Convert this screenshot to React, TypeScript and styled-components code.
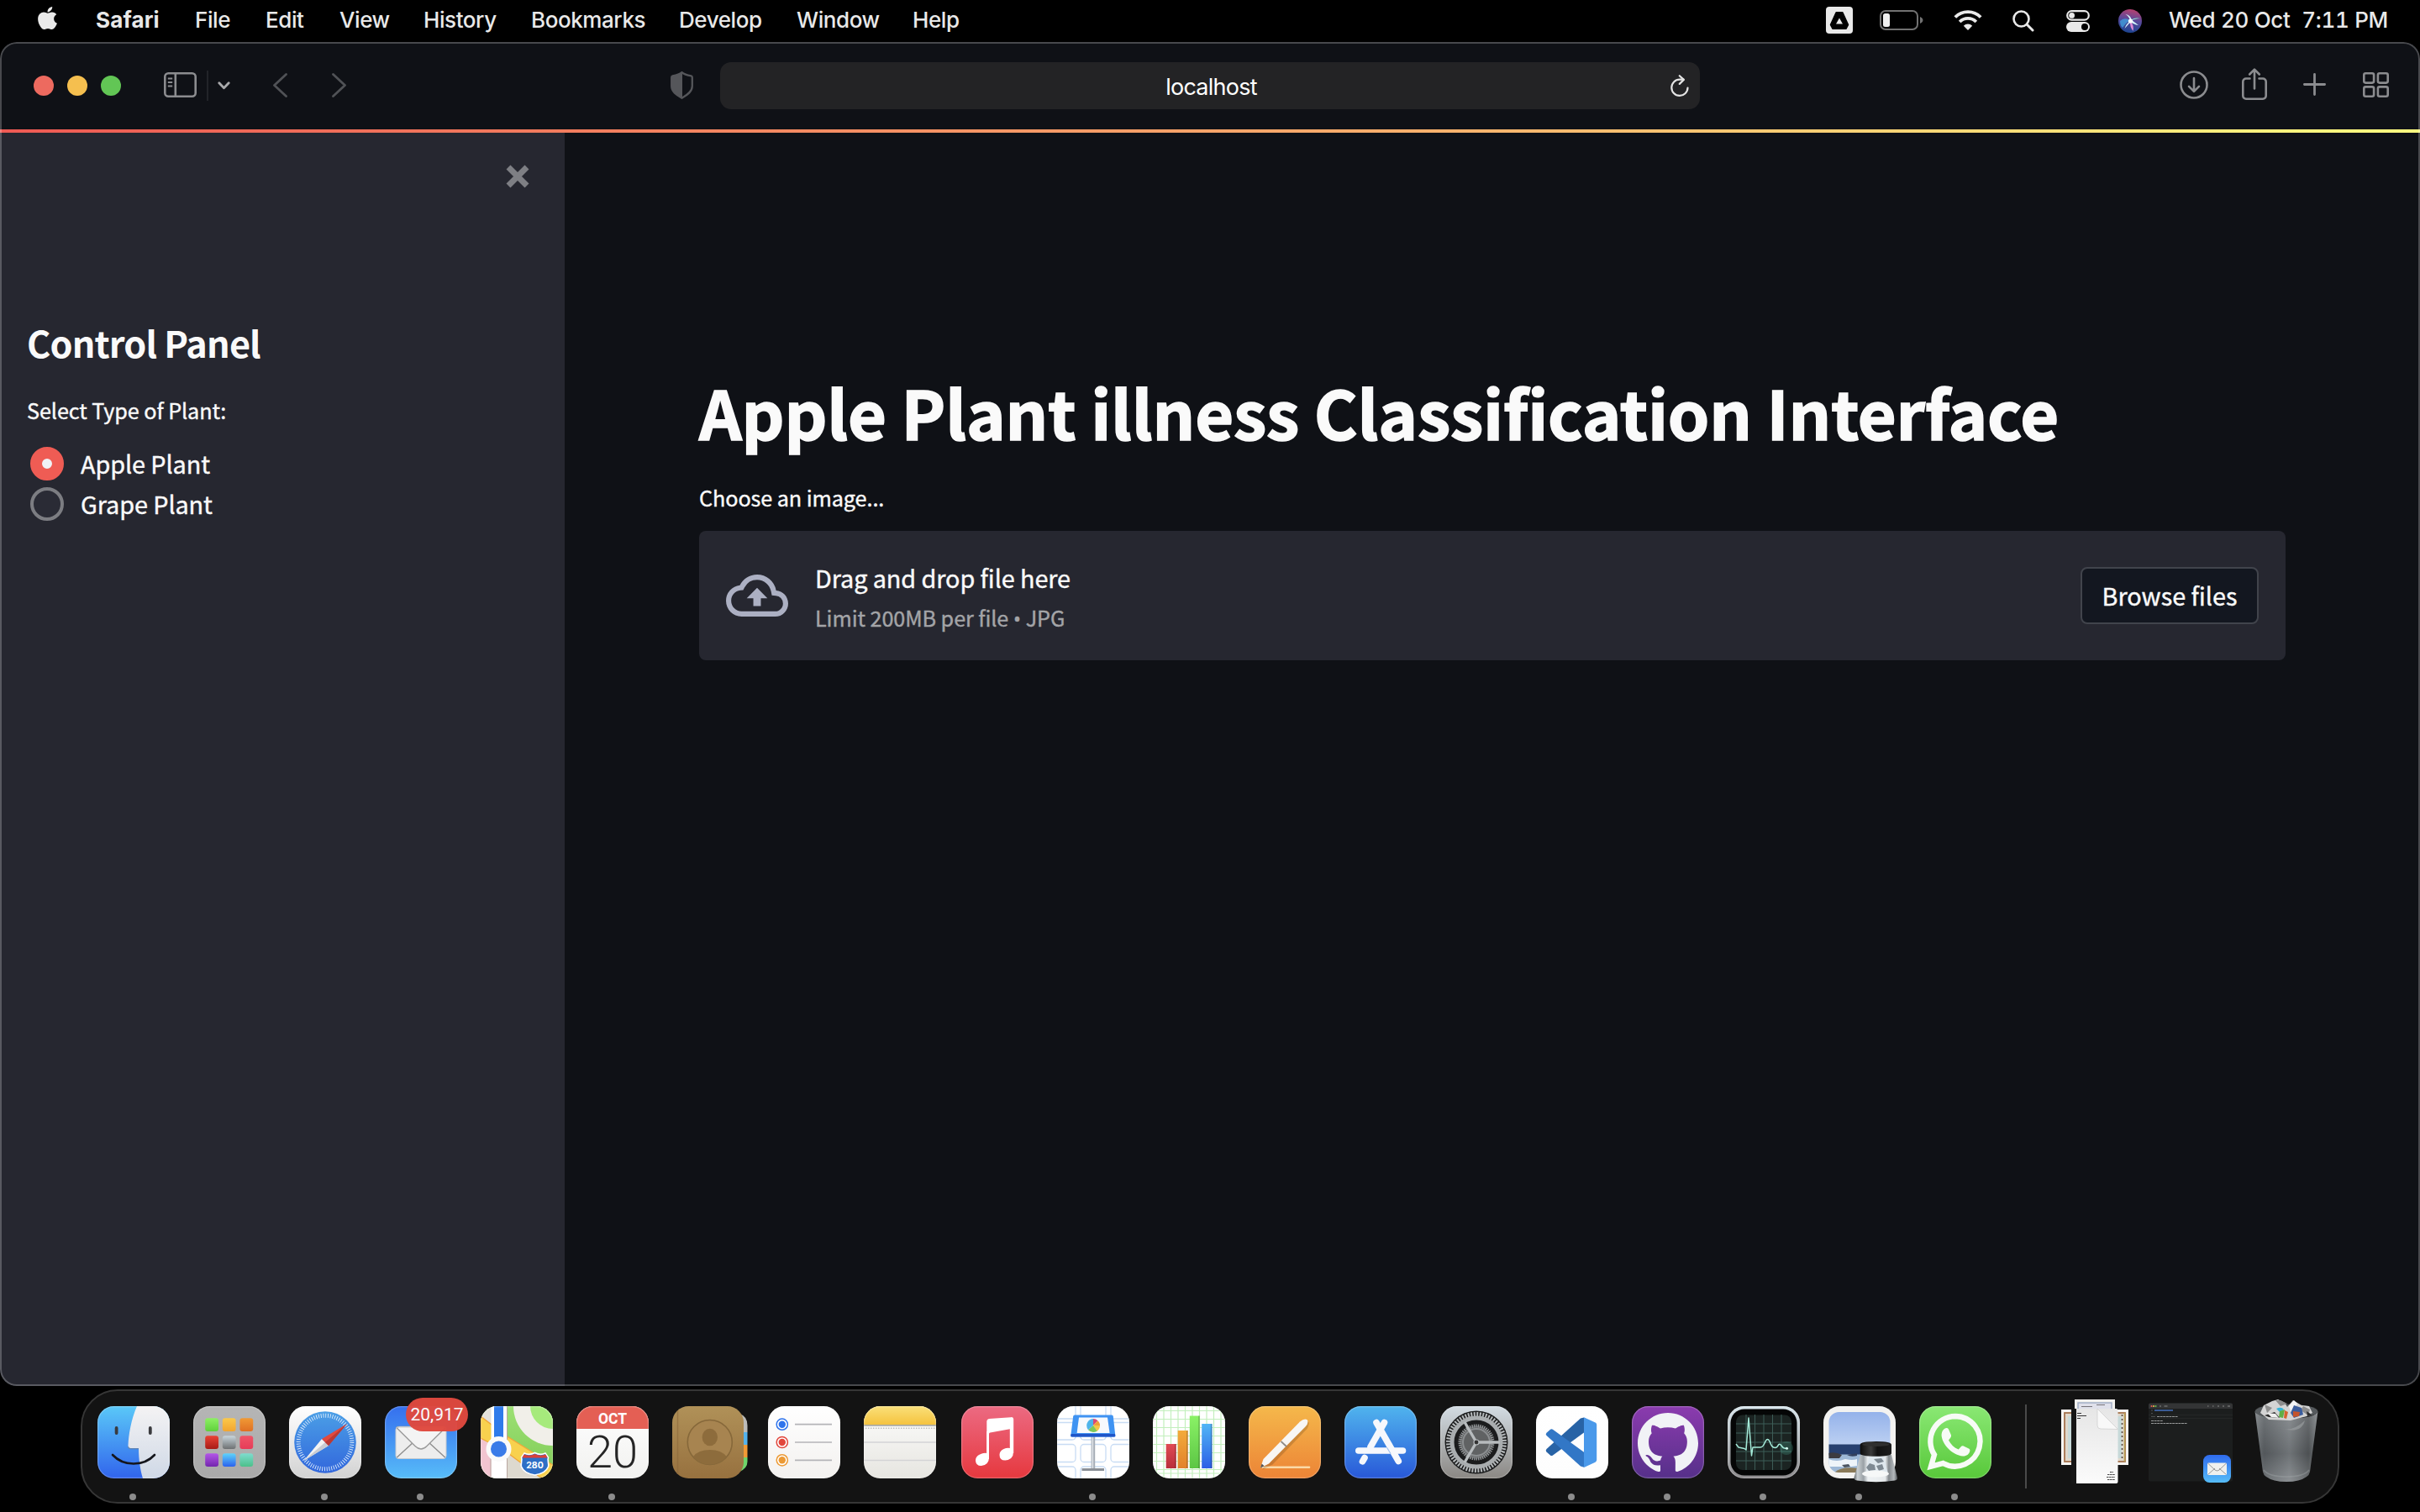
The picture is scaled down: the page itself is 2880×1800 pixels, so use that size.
import React from "react";
import styled, { createGlobalStyle } from "styled-components";
import { FaApple } from "react-icons/fa";

const UI_FONT = `Inter, Roboto, "Liberation Sans", sans-serif`;
const PAGE_FONT = `"Noto Sans CJK SC", "Open Sans", "Noto Sans", sans-serif`;

const GlobalStyle = createGlobalStyle`
  * { box-sizing: border-box; }
  html, body { margin: 0; padding: 0; background: #000; }
  body { width: 2880px; height: 1800px; overflow: hidden; }
  svg { display: block; flex: none; }
`;

const Desktop = styled.div`
  display: flex;
  flex-direction: column;
  width: 2880px;
  height: 1800px;
  background: #000;
`;

/* ---------- Menu bar ---------- */

const MenuBar = styled.header`
  display: flex;
  align-items: center;
  height: 50px;
  padding: 0 38px 0 41px;
  color: #e9e9e9;
  font-family: ${UI_FONT};
  font-size: 26px;
`;

const AppleMark = styled(FaApple)`
  width: 31px;
  height: 31px;
  margin-top: -7px;
`;

const MenuList = styled.nav`
  display: flex;
  flex: 1;
  padding-left: 42px;
`;

const MenuItem = styled.span<{ $width: number; $bold?: boolean }>`
  width: ${(p) => p.$width}px;
  font-weight: ${(p) => (p.$bold ? 700 : 500)};
  letter-spacing: ${(p) => (p.$bold ? 0.15 : -0.42)}px;
  line-height: 46px;
  padding-bottom: 2px;
  white-space: nowrap;
`;

const StatusArea = styled.div`
  display: flex;
  align-items: center;
`;

const Slot = styled.span<{ $before?: number; $lift?: number }>`
  display: flex;
  margin-left: ${(p) => p.$before ?? 0}px;
  margin-bottom: ${(p) => p.$lift ?? 0}px;
`;

const Clock = styled.span`
  display: flex;
  justify-content: space-between;
  width: 261px;
  margin-left: 32px;
  font-weight: 500;
  font-variant-numeric: tabular-nums;
  letter-spacing: -0.3px;
  line-height: 46px;
  padding-bottom: 2px;
  white-space: nowrap;
`;

/* ---------- Browser window ---------- */

const BrowserWindow = styled.section`
  position: relative;
  display: flex;
  flex-direction: column;
  height: 1600px;
  border-radius: 20px;
  overflow: hidden;
  background: #0f1116;
  &::after {
    content: "";
    position: absolute;
    inset: 0;
    border-radius: 20px;
    border: 2px solid rgba(255, 255, 255, 0.24);
    pointer-events: none;
  }
`;

const Toolbar = styled.div`
  display: flex;
  align-items: center;
  height: 104px;
  padding: 0 37px 0 40px;
`;

const ToolGroup = styled.div<{ $width?: number }>`
  display: flex;
  align-items: center;
  width: ${(p) => (p.$width ? `${p.$width}px` : "auto")};
  margin-left: ${(p) => (p.$width ? 0 : "auto")};
`;

const Light = styled.i<{ $color: string }>`
  width: 24px;
  height: 24px;
  margin-right: 16px;
  border-radius: 50%;
  background: ${(p) => p.$color};
`;

const ToolDivider = styled.i`
  width: 2px;
  height: 36px;
  margin-left: 12px;
  background: #222429;
`;

const AddressBar = styled.div`
  display: grid;
  grid-template-columns: 1fr auto 1fr;
  align-items: center;
  width: 1166px;
  height: 56px;
  margin-left: 32px;
  padding-right: 13px;
  border-radius: 13px;
  background: #232325;
`;

const Url = styled.span`
  grid-column: 2;
  margin-left: 16px;
  padding-top: 2px;
  color: #fff;
  font-family: ${UI_FONT};
  font-size: 27px;
  letter-spacing: -0.75px;
`;

const Reload = styled.span`
  display: flex;
  justify-content: flex-end;
`;

const Decoration = styled.div`
  height: 4px;
  flex: none;
  background: linear-gradient(90deg, #ee5a54 0%, #f8b26d 60%, #fffd80 100%);
`;

const PageBody = styled.div`
  display: flex;
  flex: 1;
  color: #fafafa;
  font-family: ${PAGE_FONT};
`;

const Sidebar = styled.aside`
  display: flex;
  flex-direction: column;
  width: 672px;
  padding: 38px 32px;
  background: #262730;
`;

const CloseButton = styled.div`
  align-self: flex-end;
  padding-right: 10px;
`;

const PanelTitle = styled.h2`
  margin: 154px 0 31px;
  font-size: 43.2px;
  font-weight: 600;
  letter-spacing: -0.85px;
  line-height: 58px;
`;

const FieldLabel = styled.div`
  font-size: 25.2px;
  line-height: 42px;
  letter-spacing: -0.08px;
  white-space: nowrap;
  -webkit-text-stroke: 0.4px currentColor;
`;

const RadioGroup = styled.div`
  display: flex;
  flex-direction: column;
  padding: 19px 4px 0;
`;

const RadioRow = styled.div`
  display: flex;
  align-items: center;
  height: 48px;
  gap: 20px;
`;

const RadioMark = styled.i<{ $on?: boolean }>`
  width: 40px;
  height: 40px;
  border-radius: 50%;
  border: ${(p) => (p.$on ? "14px solid #ef5c54" : "4px solid #7c7d82")};
  background: ${(p) => (p.$on ? "#f0f2f6" : "#2a2b35")};
`;

const BodyText = styled.span`
  font-size: 28.8px;
  line-height: 46px;
  letter-spacing: -0.08px;
  white-space: nowrap;
  -webkit-text-stroke: 0.4px currentColor;
`;

const Main = styled.main`
  flex: 1;
  padding: 279px 160px 0;
`;

const PageTitle = styled.h1`
  margin: 0 0 28px;
  font-size: 79.2px;
  font-weight: 700;
  letter-spacing: -0.18px;
  line-height: 106px;
  white-space: nowrap;
  font-variant-ligatures: none;
  -webkit-text-stroke: 1.6px currentColor;
`;

const Dropzone = styled.div`
  display: flex;
  align-items: center;
  height: 154px;
  margin-top: 19px;
  padding: 0 32px;
  border-radius: 8px;
  background: #262730;
`;

const DropText = styled.div`
  display: flex;
  flex: 1;
  flex-direction: column;
  gap: 3px;
  margin-left: 32px;
  padding-top: 3px;
`;

const Hint = styled(FieldLabel)`
  color: #a3a4a7;
`;

const Bullet = styled.span`
  font-family: "Open Sans", "Noto Sans", sans-serif;
`;

const BrowseButton = styled.button`
  width: 212px;
  height: 68px;
  padding: 0;
  border: 2px solid #41444c;
  border-radius: 8px;
  background: #131720;
  color: #fafafa;
  font-family: ${PAGE_FONT};
  font-size: 28.8px;
  line-height: 62px;
  white-space: nowrap;
  -webkit-text-stroke: 0.4px currentColor;
`;

/* ---------- Dock ---------- */

const DockBar = styled.footer`
  display: flex;
  align-items: flex-start;
  width: 2688px;
  height: 136px;
  margin: 4px 0 0 96px;
  padding: 0 0 0 18px;
  border: 2px solid #363636;
  border-radius: 44px;
  background: #131313;
`;

const DockCell = styled.div<{ $before?: number }>`
  position: relative;
  display: flex;
  flex-direction: column;
  align-items: center;
  width: 86px;
  margin-left: ${(p) => p.$before ?? 28}px;
  padding-top: 18px;
  svg { overflow: visible; }
`;

const RunningDot = styled.i`
  width: 8px;
  height: 8px;
  margin: 18px 2px 0 0;
  border-radius: 50%;
  background: #8c8c8c;
`;

const Badge = styled.span`
  position: absolute;
  top: 8px;
  left: 25px;
  width: 74px;
  height: 40px;
  border-radius: 20px;
  background: #e0493f;
  opacity: 0.97;
  color: #fff;
  font-family: Roboto, ${UI_FONT};
  font-size: 21px;
  line-height: 40px;
  text-align: center;
`;

const DockDivider = styled.i`
  width: 2px;
  height: 100px;
  margin: 16px 0 0 40px;
  background: #4a4a4a;
`;

const DockExtra = styled.div<{ $before: number }>`
  margin-left: ${(p) => p.$before}px;
  padding-top: 10px;
`;

/* ---------- Status icons ---------- */

const InputIcon = () => (
  <svg width="32" height="32" viewBox="0 0 32 32">
    <rect width="32" height="32" rx="4" fill="#e9e9e9" />
    <path d="M12.4 7h7.2l6.6 14.5-2.4 4.5H8.2l-2.4-4.500z" fill="#000" stroke="#000" strokeWidth="2" strokeLinejoin="round" />
    <path d="M16 13.500l4 7h-8z" fill="#e9e9e9" />
  </svg>
);

const BatteryIcon = () => (
  <svg width="52" height="24" viewBox="0 0 52 24">
    <rect x="1" y="1" width="44" height="22" rx="6" fill="none" stroke="#717171" strokeWidth="2" />
    <path d="M48 8q3.500 1.500 3.500 4t-3.500 4z" fill="#717171" />
    <rect x="4" y="4" width="8" height="16" rx="2.500" fill="#f0f0f0" />
  </svg>
);

const WifiIcon = () => (
  <svg width="34" height="24" viewBox="0 0 34 24" fill="none" stroke="#e9e9e9" strokeWidth="3.800">
    <path d="M1.800 8.500a21.500 21.500 0 0 1 30.400 0" />
    <path d="M7.200 14a13.900 13.900 0 0 1 19.600 0" />
    <path d="M17 24l-5.200-5.200a7.300 7.300 0 0 1 10.400 0z" fill="#e9e9e9" stroke="none" />
  </svg>
);

const SearchIcon = () => (
  <svg width="26" height="26" viewBox="0 0 26 26" fill="none" stroke="#e9e9e9" strokeWidth="2.600" strokeLinecap="round">
    <circle cx="10.500" cy="10.500" r="9" />
    <path d="M17.300 17.300l6.700 6.700" strokeWidth="3" />
  </svg>
);

const ControlCenterIcon = () => (
  <svg width="28" height="26" viewBox="0 0 28 26">
    <rect x="1.200" y="1.200" width="25.600" height="10.400" rx="5.200" fill="none" stroke="#e9e9e9" strokeWidth="2.200" />
    <circle cx="6.600" cy="6.400" r="3.400" fill="#e9e9e9" />
    <rect y="14" width="28" height="12" rx="6" fill="#e9e9e9" />
    <circle cx="22" cy="20" r="4" fill="#000" />
  </svg>
);

const SiriIcon = () => (
  <svg width="28" height="28" viewBox="0 0 28 28">
    <defs>
      <linearGradient id="siri" x1="0.600" y1="0" x2="0.400" y2="1">
        <stop offset="0" stopColor="#b8406e" />
        <stop offset="0.450" stopColor="#5a4a9c" />
        <stop offset="1" stopColor="#1b4490" />
      </linearGradient>
    </defs>
    <circle cx="14" cy="14" r="14" fill="url(#siri)" />
    <path d="M2 14q5-5 12-1-6 4-9 9-3-3-3-8z" fill="#3fa3e0" opacity=".75" />
    <path d="M14 14q5-5 12-3-6 0-12 3z" fill="#8ff0d8" />
    <path d="M14 14q5 5 3.500 12-4-5-3.500-12z" fill="#e08ad8" />
    <path d="M14.500 14q-2-6-6-8 6 1 7.500 7l8 6q-6-1-9.500-4l-7 8q2-6 7-9z" fill="#d9fbff" />
    <circle cx="14.500" cy="14" r="2.600" fill="#fff" />
  </svg>
);

/* ---------- Toolbar icons ---------- */

const SidebarIcon = () => (
  <svg width="39" height="30" viewBox="0 0 39 30" fill="none" stroke="#8b8c8f" strokeWidth="2.600">
    <rect x="1.300" y="1.300" width="36.400" height="27.400" rx="4" />
    <path d="M13.800 1v28" />
    <path d="M4.800 7.500h5.400M4.800 12h5.400M4.800 16.500h5.400" strokeWidth="2" />
  </svg>
);

const SmallChevron = () => (
  <svg width="15" height="10" viewBox="0 0 15 10" fill="none" stroke="#a9aaac" strokeWidth="2.800" strokeLinecap="round" strokeLinejoin="round">
    <path d="M1.800 1.800l5.700 6 5.700-6" />
  </svg>
);

const NavArrow = ({ forward }: { forward?: boolean }) => (
  <svg width="17" height="29" viewBox="0 0 17 29" fill="none" stroke="#505256" strokeWidth="2.800" strokeLinecap="round" strokeLinejoin="round">
    <path d={forward ? "M1.500 1.500l14 13-14 13" : "M15.500 1.500l-14 13 14 13"} />
  </svg>
);

const ShieldIcon = () => (
  <svg width="27" height="33" viewBox="0 0 27 33">
    <path d="M13.500 1.200C16 3.400 20 4.600 24.500 5.400q1.300.3 1.300 1.800v10.300c0 6.500-5.800 10.500-12.300 14.200C7 28 1.200 24 1.200 17.500V7.200q0-1.500 1.300-1.800C7 4.600 11 3.400 13.500 1.200z" fill="none" stroke="#55565a" strokeWidth="2.300" />
    <path d="M14 1.200C11 3.400 7 4.600 2.500 5.400 1.200 5.700 1.200 6 1.200 7.200v10.300C1.200 24 7 28 14 31.700z" fill="#55565a" />
  </svg>
);

const ReloadIcon = () => (
  <svg width="22" height="27" viewBox="0 0 22 27" fill="none" stroke="#e4e4e4" strokeWidth="2.200" strokeLinecap="round" strokeLinejoin="round">
    <path d="M20.500 15.500a9.600 9.600 0 1 1-9.600-9.800h4.600" />
    <path d="M10.800 1.200l5 4.700-5 5" />
  </svg>
);

const DownloadIcon = () => (
  <svg width="34" height="34" viewBox="0 0 34 34" fill="none" stroke="#8b8c8f" strokeWidth="2.600" strokeLinecap="round" strokeLinejoin="round">
    <circle cx="17" cy="17" r="15.500" />
    <path d="M17 9v15.500M11 18.800l6 6 6-6" />
  </svg>
);

const ShareIcon = () => (
  <svg width="30" height="38" viewBox="0 0 30 38" fill="none" stroke="#8b8c8f" strokeWidth="2.600" strokeLinecap="round" strokeLinejoin="round">
    <path d="M9.500 12.500H5a3.700 3.700 0 0 0-3.700 3.700V33A3.700 3.700 0 0 0 5 36.700h20a3.700 3.700 0 0 0 3.700-3.700V16.200A3.700 3.700 0 0 0 25 12.500h-4.500" />
    <path d="M15 24.500V2M9.200 7.500L15 1.600l5.800 5.900" />
  </svg>
);

const PlusIcon = () => (
  <svg width="27" height="27" viewBox="0 0 27 27" stroke="#8b8c8f" strokeWidth="2.800" strokeLinecap="round">
    <path d="M13.500 1.400v24.200M1.400 13.500h24.200" />
  </svg>
);

const GridIcon = () => (
  <svg width="31" height="30" viewBox="0 0 31 30" fill="none" stroke="#8b8c8f" strokeWidth="2.600">
    <rect x="1.300" y="1.300" width="11.800" height="11.300" rx="2" />
    <rect x="17.900" y="1.300" width="11.800" height="11.300" rx="2" />
    <rect x="1.300" y="17.400" width="11.800" height="11.300" rx="2" />
    <rect x="17.900" y="17.400" width="11.800" height="11.300" rx="2" />
  </svg>
);

const CloseIcon = () => (
  <svg width="28" height="28" viewBox="0 0 28 28" stroke="#7e7f84" strokeWidth="7" strokeLinecap="butt">
    <path d="M3 3l22 22M25 3L3 25" />
  </svg>
);

const CloudIcon = () => (
  <svg width="74" height="50" viewBox="0 4 24 16" preserveAspectRatio="none" fill="#acb0c3">
    <path d="M19.350 10.040A7.490 7.490 0 0 0 12 4C9.110 4 6.600 5.640 5.350 8.040A5.994 5.994 0 0 0 0 14c0 3.310 2.690 6 6 6h13c2.760 0 5-2.240 5-5 0-2.640-2.050-4.780-4.650-4.960zM19 18H6c-2.210 0-4-1.790-4-4 0-2.050 1.530-3.760 3.560-3.970l1.070-.11.500-.95A5.469 5.469 0 0 1 12 6c2.620 0 4.880 1.860 5.390 4.430l.3 1.500 1.530.11A2.980 2.980 0 0 1 22 15c0 1.650-1.350 3-3 3zM8 13h2.550v3h2.900v-3H16l-4-4z" />
  </svg>
);

/* ---------- Dock icons ---------- */

type TileProps = { id: string; top: string; bottom: string; children?: React.ReactNode };

const Tile = ({ id, top, bottom, children }: TileProps) => (
  <svg width="86" height="86" viewBox="0 0 86 86">
    <defs>
      <linearGradient id={`${id}-bg`} x1="0" y1="0" x2="0" y2="1">
        <stop offset="0" stopColor={top} />
        <stop offset="1" stopColor={bottom} />
      </linearGradient>
      <clipPath id={`${id}-clip`}>
        <rect width="86" height="86" rx="19.500" />
      </clipPath>
    </defs>
    <rect width="86" height="86" rx="19.500" fill={`url(#${id}-bg)`} />
    <g clipPath={`url(#${id}-clip)`}>{children}</g>
    <rect x=".6" y=".6" width="84.800" height="84.800" rx="19" fill="none" stroke="#fff" strokeOpacity=".22" strokeWidth="1.200" />
  </svg>
);

const Finder = () => (
  <Tile id="finder" top="#5ac8f8" bottom="#3164ec">
    <defs>
      <linearGradient id="finder-face" x1="0" y1="0" x2="0" y2="1">
        <stop offset="0" stopColor="#f4f3f4" />
        <stop offset="1" stopColor="#cfd8e6" />
      </linearGradient>
    </defs>
    <path d="M47 0C40 16 37 34 36.500 47q0 3 3 3H49c0 14 2 26 5 36h32V0z" fill="url(#finder-face)" />
    <path d="M36.500 48q.3 2.600 3 2.600H49" fill="none" stroke="#777" strokeOpacity=".5" strokeWidth="1.200" />
    <path d="M22.600 26v6M62.800 26v6" stroke="#3a3a3e" strokeWidth="3.800" strokeLinecap="round" />
    <path d="M18 58c13 14 37 14 50 0" fill="none" stroke="#15161c" strokeWidth="2.600" strokeLinecap="round" />
  </Tile>
);

const padColors: [string, string][] = [
  ["#8ef064", "#5fd03c"], ["#fbc94a", "#f2a530"], ["#f09a35", "#e07024"],
  ["#ea4335", "#a81c16"], ["#c9d6dc", "#6d7072"], ["#ef5568", "#e63c58"],
  ["#b457e8", "#7326ae"], ["#5fd4fa", "#2b62ee"], ["#7fdccf", "#4cc08a"],
];

const Launchpad = () => (
  <Tile id="pad" top="#b5b5b5" bottom="#aaaaaa">
    <defs>
      {padColors.map(([a, b], i) => (
        <linearGradient key={i} id={`pad-${i}`} x1="0" y1="0" x2="0" y2="1">
          <stop offset="0" stopColor={a} />
          <stop offset="1" stopColor={b} />
        </linearGradient>
      ))}
    </defs>
    {padColors.map((_, i) => (
      <rect key={i} x={14.200 + (i % 3) * 20.600} y={14.200 + Math.floor(i / 3) * 21} width="15.800" height="15.800" rx="3" fill={`url(#pad-${i})`} />
    ))}
  </Tile>
);

const SafariApp = () => (
  <Tile id="safari" top="#ffffff" bottom="#d2d2d2">
    <defs>
      <linearGradient id="safari-dial" x1="0" y1="0" x2="0" y2="1">
        <stop offset="0" stopColor="#4b9fe6" />
        <stop offset="1" stopColor="#3267dc" />
      </linearGradient>
    </defs>
    <circle cx="43" cy="43" r="36.800" fill="url(#safari-dial)" />
    <circle cx="43" cy="43" r="31.800" fill="none" stroke="#dfeefc" strokeWidth="5" strokeDasharray="0.900 1.876" />
    <path d="M17.500 65L39 39l8 8z" fill="#f3f3f3" />
    <path d="M17.500 65L43 43l4 4z" fill="#c9ccd2" />
    <path d="M69 21L39 39l8 8z" fill="#e2493e" />
    <path d="M69 21L43 43l4 4z" fill="#b83a36" />
  </Tile>
);

const Envelope = () => (
  <g>
    <rect x="13" y="24.500" width="60" height="38" rx="3.500" fill="#ededed" />
    <path d="M13.800 61.500L35 42M72.200 61.500L51 42" stroke="#8e8e8e" strokeWidth="1.400" />
    <path d="M13.800 25.500L36 47.500q7 7 14 0L72.200 25.500q-1-1-3-1H17q-2 0-3.200 1z" fill="#f4f4f4" stroke="#9b9b9b" strokeWidth="1.400" />
    <rect x="13" y="24.500" width="60" height="38" rx="3.500" fill="none" stroke="#c4c9cf" strokeWidth="1" />
  </g>
);

const Mail = () => (
  <Tile id="mail" top="#356fee" bottom="#57bcf8">
    <Envelope />
  </Tile>
);

const Maps = () => (
  <Tile id="maps" top="#9de074" bottom="#7ecb56">
    <rect width="32" height="86" fill="#e4e1da" />
    <path d="M30 50L86 86H30z" fill="#ddd9cf" />
    <path d="M0 38L14 48V86H0z" fill="#f2c4d0" />
    <circle cx="86" cy="0" r="47" fill="#f1efe9" />
    <circle cx="86" cy="0" r="27" fill="#a6ea7c" />
    <path d="M0 12L30 35 86 70V90L70 84 30 54 0 38z" fill="#f8d14e" stroke="#f0a63a" strokeWidth="1.400" />
    <rect x="12.500" y="-2" width="18.500" height="90" fill="#fff" />
    <path d="M12 45V86M31.500 0V86" stroke="#b9a7a0" strokeWidth="1" />
    <rect x="16" width="11" height="44" fill="#2f7bea" />
    <circle cx="21.500" cy="51" r="15" fill="#fafafa" />
    <circle cx="21.500" cy="51" r="9.500" fill="#3a7be8" />
    <path d="M52 56q6 3 12.500-.5Q71 59 77 56l3.500 5c-1.500 3 1 7 0 11q-3 8-16 10-13-2-16-10c-1-4 1.500-8 0-11z" fill="#2e6fc6" stroke="#fff" strokeWidth="1.600" />
    <path d="M51.500 57.500q6.500 2.500 13-.5 6.500 3 13 .5l2 4h-30z" fill="#d9403a" />
    <text x="64.500" y="73.500" fill="#fff" fontFamily={UI_FONT} fontSize="10.500" fontWeight="700" textAnchor="middle">280</text>
  </Tile>
);

const Calendar = () => (
  <Tile id="cal" top="#ffffff" bottom="#f1f1ef">
    <rect width="86" height="27" fill="#e45f54" />
    <text x="43" y="20.800" fill="#fff" fontFamily={`Roboto, ${UI_FONT}`} fontSize="17.500" fontWeight="700" textAnchor="middle">OCT</text>
    <text x="43" y="72.500" fill="#252525" fontFamily={`Roboto, ${UI_FONT}`} fontSize="54" fontWeight="300" textAnchor="middle">20</text>
  </Tile>
);

const Contacts = () => (
  <svg width="86" height="86" viewBox="0 0 86 86">
    <defs>
      <linearGradient id="book" x1="0" y1="0" x2="0" y2="1">
        <stop offset="0" stopColor="#b09158" />
        <stop offset="1" stopColor="#97713f" />
      </linearGradient>
    </defs>
    <path d="M80 9q9.500 3 9.500 14v8H80z" fill="#bcbcba" />
    <path d="M80 31h9.500v15H80z" fill="#55b3ec" />
    <path d="M80 46h9.500v15H80z" fill="#f29a36" />
    <path d="M80 61h9.500v5q0 8-9.500 12z" fill="#6fd66b" />
    <rect width="85" height="86" rx="19.500" fill="url(#book)" />
    <path d="M6.500 5V81" stroke="#8a683a" strokeOpacity=".6" strokeWidth="1.400" />
    <circle cx="44.800" cy="43" r="26.500" fill="#a78450" stroke="#86683a" strokeWidth="1.600" />
    <ellipse cx="44.800" cy="37" rx="9.200" ry="10.300" fill="#8d6c3c" />
    <path d="M25 60q6-8 19.800-8t19.800 8Q57 69.500 44.800 69.500T25 60z" fill="#8d6c3c" />
  </svg>
);

const Reminders = () => (
  <Tile id="rem" top="#ffffff" bottom="#f3f1ef">
    {["#2f74ec", "#e2473c", "#ec9a35"].map((c, i) => (
      <g key={c}>
        <circle cx="16.800" cy={21.700 + i * 21.300} r="6.600" fill="#fff" stroke={c} strokeWidth="1.500" />
        <circle cx="16.800" cy={21.700 + i * 21.300} r="4.200" fill={c} />
        <path d={`M32 ${21.700 + i * 21.300}h44`} stroke="#b4b4b8" strokeWidth="1.700" />
      </g>
    ))}
  </Tile>
);

const Notes = () => (
  <Tile id="notes" top="#fdfdfc" bottom="#e6e5e0">
    <defs>
      <linearGradient id="notes-top" x1="0" y1="0" x2="0" y2="1">
        <stop offset="0" stopColor="#fae07a" />
        <stop offset="1" stopColor="#f5c33e" />
      </linearGradient>
    </defs>
    <rect width="86" height="22" fill="url(#notes-top)" />
    <path d="M0 22.800h86" stroke="#aaa99f" strokeWidth="1.800" />
    <path d="M2 26.300h84" stroke="#bdbdb9" strokeWidth="1.400" strokeDasharray="1.400 1.600" />
    <path d="M0 43h86M0 64.500h86" stroke="#d4d4d6" strokeWidth="1.500" />
  </Tile>
);

const Music = () => (
  <Tile id="music" top="#ec6a82" bottom="#e6383e">
    <g fill="#fff">
      <path d="M30.300 18.500q0-2.800 2.800-3.500L59 13.200q3.200-.6 3.200 2.400V56h-4.400V27.200L34.300 31.500q-1.300.3-1.300 1.600V63h-2.700z" />
      <path d="M30.300 56q-4.300-.6-8.300 1.400-5 2.400-5 7 0 6.600 6.800 6.600 9.200-1 9.200-10V30h-2.700z" />
      <path d="M58 50q-4-.6-7.500 1-5 2.400-5 7 0 6.600 6.800 6.600 9.700-1 9.700-10V40H58z" />
    </g>
  </Tile>
);

const Keynote = () => (
  <Tile id="key" top="#ffffff" bottom="#ffffff">
    <g fill="none" stroke="#c8dcf4" strokeWidth="1.300">
      <path d="M0 15h86M0 19.500h86M22 0v38M28 0v38M58 0v38M64 0v38" />
      <path d="M0 40h18q4 0 4-4M64 36q0 4 4 4h18M28 36q0 4 4 4h22q4 0 4-4" />
      <rect x="-10" y="45.500" width="32" height="21" rx="4" />
      <rect x="28" y="45.500" width="30" height="21" rx="4" />
      <rect x="64" y="45.500" width="32" height="21" rx="4" />
      <rect x="-10" y="72" width="32" height="24" rx="4" />
      <rect x="28" y="72" width="30" height="24" rx="4" />
      <rect x="64" y="72" width="32" height="24" rx="4" />
    </g>
    <rect x="40.600" y="36" width="4.600" height="39" fill="#a6adb6" />
    <rect x="41.600" y="36" width="1.600" height="39" fill="#dfe3e8" />
    <rect x="29.500" y="74" width="26.500" height="3" fill="#8b9097" />
    <path d="M21 10.500h44q1.600 0 1.800 1.500L69.300 35q.1 1.500-1.500 1.500h-50q-1.600 0-1.500-1.500L19.200 12q.2-1.500 1.800-1.500z" fill="#3f93f2" />
    <path d="M16.600 33l-.3 2.300q0 1.200 1.500 1.200h50q1.600 0 1.500-1.200L69 33z" fill="#1f55c8" />
    <path d="M26 13.500h34l2.600 18.500H23.600z" fill="#f6f9fd" />
    <path d="M43 22.700V15a8 7.700 0 0 1 5.500 2.300z" fill="#d84a78" />
    <path d="M43 22.700l5.500-5.400A8 8 0 0 1 51 24z" fill="#f0a038" />
    <path d="M43 22.700l8 .5q0 4-4 7z" fill="#f4c84a" />
    <path d="M43 22.700l4.500 7q-6 3-10.500-1.500z" fill="#7cc95c" />
    <path d="M43 22.700l-6 5.500q-3.500-5-.5-9.500Q39 15 43 15z" fill="#4db4ea" />
  </Tile>
);

const bars: [number, number, number, string, string][] = [
  [15.700, 45, 12, "#e04a55", "#b92f3b"],
  [29.700, 29, 12, "#f3ab3c", "#e2812b"],
  [43.800, 11.500, 12, "#8af266", "#5cc644"],
  [58.200, 21, 12.300, "#52b6f6", "#2c5fe6"],
];

const Numbers = () => (
  <Tile id="num" top="#ffffff" bottom="#ffffff">
    <path d="M4.500 0v86M13 0v86M21.500 0v86M30 0v86M38.500 0v86M47 0v86M55.500 0v86M64 0v86M72.500 0v86M81 0v86M0 5.500h86M0 15.500h86M0 25.500h86M0 35.500h86M0 45.500h86M0 55.500h86M0 65.500h86M0 75.500h86M0 80h86" stroke="#c3efbd" strokeWidth="1.200" />
    {bars.map(([x, y, w, a, b], i) => (
      <g key={i}>
        <defs>
          <linearGradient id={`num-${i}`} x1="0" y1="0" x2="0" y2="1">
            <stop offset="0" stopColor={a} />
            <stop offset="1" stopColor={b} />
          </linearGradient>
        </defs>
        <rect x={x} y={y} width={w} height={74 - y} fill={`url(#num-${i})`} />
        <path d={`M${x + w - 0.800} ${y}V74`} stroke="#000" strokeOpacity=".2" strokeWidth="1.600" />
      </g>
    ))}
  </Tile>
);

const Pages = () => (
  <Tile id="pages" top="#f5b84b" bottom="#ec8436">
    <path d="M17 72.700h55" stroke="#fbd9a6" strokeWidth="2.600" strokeLinecap="round" />
    <path d="M15 73.500l4-9.500L61 19q5-4.500 8.500-2.700Q71.500 19 68 25L27 67.500z" fill="#000" fillOpacity=".15" transform="translate(1.500 2)" />
    <path d="M14 73.500l3.500-10.500L61 18.500q5-4.200 8.500-2.500Q72 19.500 67.500 24.500L24 68.500z" fill="#f8f6f4" />
    <path d="M14 73.500l1.600-5 3 2.700z" fill="#555" />
    <path d="M38.500 42l6.500 6" stroke="#8e8a86" strokeWidth="1.800" />
  </Tile>
);

const AppStore = () => (
  <Tile id="store" top="#50b4ee" bottom="#2858d8">
    <g stroke="#f6f8fc" strokeWidth="7.600" strokeLinecap="round">
      <path d="M38 19.500L64.300 65.500" />
      <path d="M16.800 53H69.500" />
      <path d="M47.500 19.500L31 48.500" />
      <path d="M24 61.500L21.500 65.800" />
    </g>
    <path d="M50.500 49.300l4.600 7.500" stroke="#9fc1ee" strokeWidth="1.200" />
  </Tile>
);

const SystemPrefs = () => (
  <Tile id="prefs" top="#d3dce3" bottom="#8b8884">
    <circle cx="43" cy="43" r="37.500" fill="#1b1c1d" />
    <circle cx="43" cy="43" r="33.500" fill="none" stroke="#b4b8ba" strokeWidth="5" strokeDasharray="2 1.508" />
    <circle cx="43" cy="43" r="29" fill="none" stroke="#a9adaf" strokeWidth="5" />
    <circle cx="43" cy="43" r="19.500" fill="#5d5f60" stroke="#929597" strokeWidth="4" strokeDasharray="1.400 1.050" />
    <circle cx="43" cy="43" r="16" fill="#606263" stroke="#8b8e90" strokeWidth="2" />
    <g stroke="#b7bbbd" strokeWidth="3.400">
      <path d="M43 43H71M43 43L29 19M43 43L29 67" />
    </g>
    <circle cx="43" cy="43" r="3" fill="#333" stroke="#b7bbbd" strokeWidth="1.200" />
  </Tile>
);

const VSCode = () => (
  <Tile id="code" top="#ffffff" bottom="#fdfdfd">
    <path d="M57 13.500V31.500L20 58.500q-1.600 1-3 0l-4.500-4q-1.600-1.700 0-3.400L53 14.500z" fill="#2863a6" />
    <path d="M57 72.700V54.800L20 27.700q-1.600-1-3 0l-4.500 4q-1.600 1.700 0 3.400L53 71.500z" fill="#3277c6" />
    <path d="M57 13.200l13.500 6.200q1.700.9 1.700 2.700V64q0 1.800-1.700 2.700L57 73z" fill="#4a99ea" />
  </Tile>
);

const GitHubApp = () => (
  <Tile id="gh" top="#8b3bae" bottom="#56308a">
    <g transform="translate(7 7) scale(3)">
      <path fill="#f1f2f6" d="M12 .297c-6.630 0-12 5.373-12 12 0 5.303 3.438 9.800 8.205 11.385.6.113.82-.258.82-.577 0-.285-.01-1.040-.015-2.040-3.338.724-4.042-1.610-4.042-1.610C4.422 18.070 3.633 17.700 3.633 17.700c-1.087-.744.084-.729.084-.729 1.205.084 1.838 1.236 1.838 1.236 1.070 1.835 2.809 1.305 3.495.998.108-.776.417-1.305.76-1.605-2.665-.3-5.466-1.332-5.466-5.930 0-1.310.465-2.380 1.235-3.220-.135-.303-.54-1.523.105-3.176 0 0 1.005-.322 3.300 1.230.96-.267 1.980-.399 3-.405 1.020.006 2.040.138 3 .405 2.280-1.552 3.285-1.230 3.285-1.230.645 1.653.24 2.873.12 3.176.765.84 1.230 1.910 1.230 3.220 0 4.610-2.805 5.625-5.475 5.920.42.36.81 1.096.81 2.220 0 1.606-.015 2.896-.015 3.286 0 .315.21.69.825.57C20.565 22.092 24 17.592 24 12.297c0-6.627-5.373-12-12-12" />
    </g>
  </Tile>
);

const ActivityMonitor = () => (
  <Tile id="act" top="#d8e6ec" bottom="#8c8a8c">
    <rect x="3.500" y="3.500" width="79" height="79" rx="16.500" fill="#050606" />
    <rect x="10" y="10.500" width="66" height="65.500" rx="8" fill="#1b2422" />
    <path d="M22 10v66M32.500 10v66M43 10v66M53.500 10v66M64 10v66M10 21h66M10 32h66M10 43h66M10 54h66M10 65h66" stroke="#3d5c56" strokeWidth="1" />
    <circle cx="70" cy="50" r="8" fill="#4fb59c" opacity=".25" />
    <path d="M10 45l3 4 7 1.500 2 1.500L25 14l3.500 45 1.500-10h9q3 0 5.500-6 3-7 6 0 2 6.500 6 6.500 2.500 0 4-3.500 1.500-2 3.500 1 2.500 4 6 3" fill="none" stroke="#a4ead8" strokeWidth="1.500" strokeLinejoin="round" />
    <circle cx="70.500" cy="50.200" r="1.500" fill="#d9fff5" />
  </Tile>
);

const Preview = () => (
  <svg width="86" height="86" viewBox="0 0 86 86">
    <defs>
      <clipPath id="photo"><rect x="6.500" y="7" width="73" height="72" rx="12" /></clipPath>
      <linearGradient id="sky" x1="0" y1="0" x2="0" y2="1">
        <stop offset="0" stopColor="#93b1ea" />
        <stop offset="1" stopColor="#bcd0f2" />
      </linearGradient>
      <linearGradient id="jar" x1="0" y1="0" x2="1" y2="0">
        <stop offset="0" stopColor="#5f6569" />
        <stop offset="0.080" stopColor="#c9cfd2" />
        <stop offset="0.220" stopColor="#9aa1a6" />
        <stop offset="0.320" stopColor="#eef2f4" />
        <stop offset="0.720" stopColor="#e6eaec" />
        <stop offset="0.800" stopColor="#83898d" />
        <stop offset="0.920" stopColor="#b4b9bc" />
        <stop offset="1" stopColor="#4f5457" />
      </linearGradient>
      <linearGradient id="cap" x1="0" y1="0" x2="1" y2="0">
        <stop offset="0" stopColor="#0c0c0c" />
        <stop offset="0.350" stopColor="#3b3b3b" />
        <stop offset="0.550" stopColor="#121212" />
        <stop offset="1" stopColor="#1d1d1d" />
      </linearGradient>
    </defs>
    <rect width="86" height="86" rx="19.500" fill="#f3f2f0" />
    <g clipPath="url(#photo)">
      <rect x="6" y="6" width="74" height="40" fill="url(#sky)" />
      <rect x="6" y="45.500" width="74" height="13" fill="#27406f" />
      <rect x="6" y="57.500" width="74" height="24" fill="#9db8d6" />
      <path d="M6 56q8-2 16 2l-3 4H6z" fill="#3c3b40" />
      <path d="M28 58l12-2v3q-7 2-12-1z" fill="#33405c" />
      <path d="M6 63q10 4 20 0 9 2 14 0v8q-12 2-20 1L6 72z" fill="#eef4f9" />
      <path d="M22 70l8-1 2 3-7 1z" fill="#4d5560" />
      <path d="M12 80q8-9 30-6v8z" fill="#8a7a58" />
    </g>
    <path d="M44 58h37l7 27q.6 2.500-3 3.500-22 3.500-45 0-4-1-3.500-3.500z" fill="url(#jar)" />
    <path d="M54 60h18l5 21q-14 3-27 0z" fill="#dfe8ee" />
    <path d="M60 63l9-1 3 4-7 2zM51 73l4-5 6 2 1 6-8 1zM63 71l7-2 2 6-6 2z" fill="#7f8a93" />
    <ellipse cx="62" cy="80.500" rx="16" ry="4" fill="#f6f8f8" />
    <path d="M43.700 46q0-4 18.700-4T81 46v10q0 3.800-18.600 3.800T43.700 56z" fill="url(#cap)" />
    <ellipse cx="62.400" cy="45.500" rx="16" ry="2.600" fill="#2f2f2f" />
  </svg>
);

const WhatsApp = () => (
  <Tile id="wa" top="#8ae874" bottom="#58c83a">
    <path d="M43 12a29.800 29.800 0 1 1-14.500 56L14 71.800l4-14A29.800 29.800 0 0 1 43 12z" fill="none" stroke="#f7fbf6" strokeWidth="6.400" strokeLinejoin="miter" />
    <path d="M31.500 26.200c1.600-.3 3 .1 3.700 1.700l2.600 6.200c.5 1.300.3 2.300-.5 3.400l-2.300 2.900c2.600 5.200 6.600 8.900 11.800 11.100l2.900-3.200c.9-1 1.800-1.300 3.100-.7l6.200 2.900c1.300.7 1.600 1.500 1.300 3-.8 4-4.400 6.200-8.300 6-12.400-1.300-24.200-13.200-25.400-24.300-.1-4.200 1.600-8 4.900-9z" fill="#f7fbf6" />
  </Tile>
);

const DocumentStack = () => (
  <svg width="80" height="100" viewBox="0 0 80 100">
    <defs>
      <linearGradient id="sheet" x1="0" y1="0" x2="0" y2="1">
        <stop offset="0" stopColor="#e6e6e6" />
        <stop offset="1" stopColor="#fbfbfb" />
      </linearGradient>
    </defs>
    <rect x="16" y="0" width="48" height="40" fill="#f2f1ee" />
    <rect x="20" y="4" width="40" height="36" fill="#dfe0ea" stroke="#a3aec6" strokeWidth="1.500" />
    <path d="M24 8.500h13M42 6.500h10" stroke="#77747a" strokeWidth="1" />
    <rect x="0" y="12" width="80" height="66" fill="#f7f6f3" />
    <rect x="4" y="16" width="72" height="58" fill="#dfd8cc" stroke="#a5734e" strokeWidth="1.800" />
    <rect x="8" y="20" width="64" height="50" fill="#c7d9d9" />
    <path d="M72.500 18v54" stroke="#5a4a3c" strokeWidth="1.600" strokeDasharray="2 3" />
    <path d="M75.500 16v58" stroke="#b99f52" strokeWidth="1.600" />
    <rect x="12" y="11" width="55.500" height="89" rx="2" fill="url(#sheet)" />
    <rect x="12" y="11" width="6" height="89" fill="#161616" />
    <path d="M43 11v20q0 4 4 4l20.500.5z" fill="#f8f8f8" stroke="#cfcfcf" strokeWidth=".8" />
    <path d="M19 16.500h5M19 19.500h11M19 22.500h4" stroke="#333" strokeWidth="1.200" />
    <path d="M58 86.500h4M55 89.500h9M54 92.500h10M55 95.500h9" stroke="#444" strokeWidth="1.200" strokeDasharray="2.500 .6" />
  </svg>
);

const MinimizedWindow = () => (
  <svg width="100" height="100" viewBox="0 0 100 100">
    <defs>
      <linearGradient id="mini" x1="0" y1="0" x2="0" y2="1">
        <stop offset="0" stopColor="#2f6bee" />
        <stop offset="1" stopColor="#56bdf8" />
      </linearGradient>
    </defs>
    <rect y="4.500" width="100" height="93" rx="2" fill="#1c1e1e" />
    <path d="M0 11V6.500q0-2 2-2h96q2 0 2 2V11z" fill="#333435" />
    <circle cx="3.500" cy="8" r="1" fill="#ee5c54" />
    <circle cx="6" cy="8" r="1" fill="#f4bd4f" />
    <circle cx="8.500" cy="8" r="1" fill="#61c554" />
    <path d="M13 8h2M18.500 8h4M70 8h1.500M76 8h1.500M82 8h2M88 8h2M94 8h3" stroke="#888" strokeWidth="1.200" />
    <path d="M7 13h22" stroke="#3f63a3" strokeWidth="1.800" />
    <path d="M3 13h2M3 16.500h2M3 20.500h5" stroke="#5d5f5f" strokeWidth=".8" />
    <path d="M10 20.500h25M3 25.500h14M3 28.500h43" stroke="#a5a6a6" strokeWidth=".9" strokeDasharray="3 .6" />
    <path d="M0 18.500h100M0 22.500h100" stroke="#2b2d2d" strokeWidth=".6" />
    <rect x="65" y="66" width="33" height="33" rx="7.500" fill="url(#mini)" />
    <rect x="70" y="75.500" width="23" height="14.500" rx="1.500" fill="#f0f0ee" />
    <path d="M70.500 89.500l8.500-7.500M92.500 89.500l-8.500-7.500M70.500 76l8.500 8q2.500 2 5 0l8.500-8" fill="none" stroke="#8d8d8d" strokeWidth=".9" />
  </svg>
);

const Trash = () => (
  <svg width="76" height="98" viewBox="0 0 76 98">
    <defs>
      <linearGradient id="bin" x1="0" y1="0" x2="1" y2="0">
        <stop offset="0" stopColor="#7a7f83" />
        <stop offset="0.150" stopColor="#5e6367" />
        <stop offset="0.550" stopColor="#7d8286" />
        <stop offset="0.850" stopColor="#575b5e" />
        <stop offset="1" stopColor="#83878a" />
      </linearGradient>
      <linearGradient id="bin-shade" x1="0" y1="0" x2="0" y2="1">
        <stop offset="0" stopColor="#fff" stopOpacity=".12" />
        <stop offset="0.600" stopColor="#000" stopOpacity=".12" />
        <stop offset="1" stopColor="#fff" stopOpacity=".12" />
      </linearGradient>
    </defs>
    <path d="M.5 14Q4 22 38 22.500T75.500 14L66 86q-.8 4-4 6-8 6-24 6t-24-6q-3.200-2-4-6z" fill="url(#bin)" />
    <path d="M.5 14Q4 22 38 22.500T75.500 14L66 86q-.8 4-4 6-8 6-24 6t-24-6q-3.200-2-4-6z" fill="url(#bin-shade)" />
    <ellipse cx="38" cy="14" rx="37.300" ry="8.500" fill="#565a5d" />
    <path d="M7 16L11 7l10-5 7-2 8 4 3 5 7-8 10 6 9 1 4 8-7 4-19 5-26-1z" fill="#d4d4d4" />
    <path d="M12 6l9 4-6 6zM25 1l6 7 8-3-8-4zM58 8l8 4-2 7-9-6z" fill="#8d8d8d" />
    <path d="M41 8l6-7 4 4-7 11z" fill="#f5f5f5" />
    <path d="M47 7l9 3 2 8-11 4-4-6z" fill="#3b5d9c" />
    <path d="M46 14l8 1-1 5-7 1z" fill="#c4542c" />
    <path d="M26 11q6-3 9 1l-5 3z" fill="#37b3d8" />
    <path d="M30 14l6-2-2 10-5-1z" fill="#5fae44" />
    <path d="M36 13l4 2-2 8-3-1z" fill="#d5632e" />
    <path d="M12 19l12-4 6 7-13-1zM62 14l6 4-5 2z" fill="#2c2c2c" />
    <path d="M15 16l10 1 4 5-9-1z" fill="#efefef" />
    <path d="M11 84q6 8 27 8t27-8" fill="none" stroke="#a3a7aa" strokeOpacity=".4" strokeWidth="1.500" />
    <path d="M30 34q14 6 30-9-4 17-30 9z" fill="#a8acae" opacity=".5" />
  </svg>
);

type DockApp = { name: string; icon: React.FC; running?: boolean; badge?: string; before?: number };

const dockApps: DockApp[] = [
  { name: "finder", icon: Finder, running: true, before: 0 },
  { name: "launchpad", icon: Launchpad },
  { name: "safari", icon: SafariApp, running: true },
  { name: "mail", icon: Mail, running: true, badge: "20,917" },
  { name: "maps", icon: Maps },
  { name: "calendar", icon: Calendar, running: true },
  { name: "contacts", icon: Contacts },
  { name: "reminders", icon: Reminders },
  { name: "notes", icon: Notes },
  { name: "music", icon: Music, before: 30 },
  { name: "keynote", icon: Keynote, running: true },
  { name: "numbers", icon: Numbers },
  { name: "pages", icon: Pages },
  { name: "appstore", icon: AppStore },
  { name: "preferences", icon: SystemPrefs },
  { name: "vscode", icon: VSCode, running: true },
  { name: "github", icon: GitHubApp, running: true },
  { name: "activity", icon: ActivityMonitor, running: true },
  { name: "preview", icon: Preview, running: true },
  { name: "whatsapp", icon: WhatsApp, running: true },
];

const menus: { label: string; width: number; bold?: boolean }[] = [
  { label: "Safari", width: 118, bold: true },
  { label: "File", width: 84 },
  { label: "Edit", width: 88 },
  { label: "View", width: 100 },
  { label: "History", width: 128 },
  { label: "Bookmarks", width: 176 },
  { label: "Develop", width: 140 },
  { label: "Window", width: 138 },
  { label: "Help", width: 60 },
];

export default function App() {
  return (
    <Desktop>
      <GlobalStyle />
      <MenuBar>
        <AppleMark />
        <MenuList>
          {menus.map((m) => (
            <MenuItem key={m.label} $width={m.width} $bold={m.bold}>{m.label}</MenuItem>
          ))}
        </MenuList>
        <StatusArea>
          <Slot $lift={2}><InputIcon /></Slot>
          <Slot $before={32} $lift={2}><BatteryIcon /></Slot>
          <Slot $before={36} $lift={3}><WifiIcon /></Slot>
          <Slot $before={36} $lift={1}><SearchIcon /></Slot>
          <Slot $before={38}><ControlCenterIcon /></Slot>
          <Slot $before={34} $lift={1}><SiriIcon /></Slot>
          <Clock><span>Wed 20 Oct</span><span>7:11 PM</span></Clock>
        </StatusArea>
      </MenuBar>

      <BrowserWindow>
        <Toolbar>
          <ToolGroup $width={758}>
            <Light $color="#ed6a5f" />
            <Light $color="#f5bf4f" />
            <Light $color="#62c655" />
            <Slot $before={35} $lift={2}><SidebarIcon /></Slot>
            <ToolDivider />
            <Slot $before={11} $lift={1}><SmallChevron /></Slot>
            <Slot $before={51} $lift={2}><NavArrow /></Slot>
            <Slot $before={53} $lift={2}><NavArrow forward /></Slot>
          </ToolGroup>
          <Slot $lift={1}><ShieldIcon /></Slot>
          <AddressBar>
            <Url>localhost</Url>
            <Reload><ReloadIcon /></Reload>
          </AddressBar>
          <ToolGroup>
            <Slot $lift={2}><DownloadIcon /></Slot>
            <Slot $before={40} $lift={5}><ShareIcon /></Slot>
            <Slot $before={43} $lift={3}><PlusIcon /></Slot>
            <Slot $before={44} $lift={2}><GridIcon /></Slot>
          </ToolGroup>
        </Toolbar>
        <Decoration />
        <PageBody>
          <Sidebar>
            <CloseButton><CloseIcon /></CloseButton>
            <PanelTitle>Control Panel</PanelTitle>
            <FieldLabel>Select Type of Plant:</FieldLabel>
            <RadioGroup>
              <RadioRow><RadioMark $on /><BodyText>Apple Plant</BodyText></RadioRow>
              <RadioRow><RadioMark /><BodyText>Grape Plant</BodyText></RadioRow>
            </RadioGroup>
          </Sidebar>
          <Main>
            <PageTitle>Apple Plant illness Classification Interface</PageTitle>
            <FieldLabel>Choose an image...</FieldLabel>
            <Dropzone>
              <CloudIcon />
              <DropText>
                <BodyText>Drag and drop file here</BodyText>
                <Hint>Limit 200MB per file <Bullet>•</Bullet> JPG</Hint>
              </DropText>
              <BrowseButton>Browse files</BrowseButton>
            </Dropzone>
          </Main>
        </PageBody>
      </BrowserWindow>

      <DockBar>
        {dockApps.map(({ name, icon: Icon, running, badge, before }) => (
          <DockCell key={name} $before={before}>
            <Icon />
            {badge && <Badge>{badge}</Badge>}
            {running && <RunningDot />}
          </DockCell>
        ))}
        <DockDivider />
        <DockExtra $before={41}><DocumentStack /></DockExtra>
        <DockExtra $before={24}><MinimizedWindow /></DockExtra>
        <DockExtra $before={26}><Trash /></DockExtra>
      </DockBar>
    </Desktop>
  );
}
